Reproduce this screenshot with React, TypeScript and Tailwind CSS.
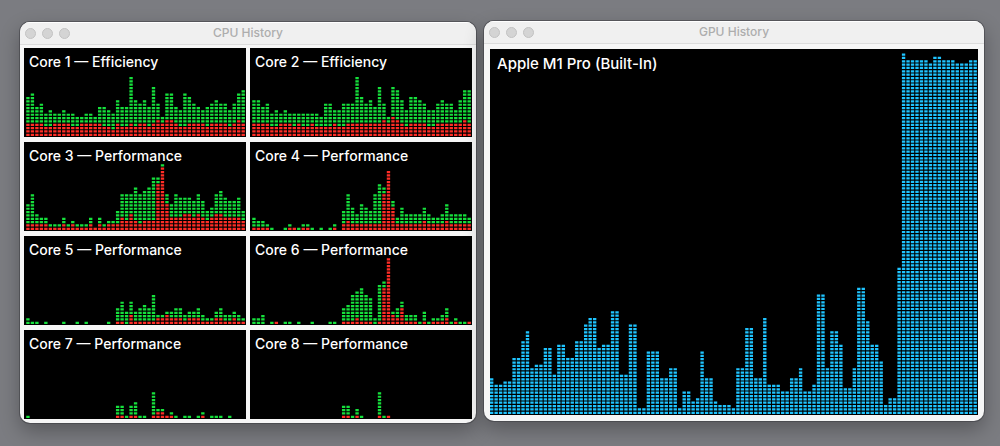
import React from 'react';

interface Core {
  name: string;
  total: number[];
  system: number[];
}

const ROW = 3;
const COL = 4;

// Load samples, in cells. `system` is the part of `total` drawn in red.
const CORES: Core[] = [
  {
    name: 'Core 1 — Efficiency',
    total: [12, 13, 9, 10, 7, 8, 7, 7, 8, 7, 7, 6, 6, 7, 7, 6, 9, 9, 8, 7, 11, 9, 9, 18, 11, 10, 11, 9, 15, 10, 6, 13, 13, 9, 8, 13, 12, 10, 9, 8, 9, 10, 11, 10, 10, 8, 10, 13, 14],
    system: [4, 4, 4, 4, 3, 3, 4, 4, 4, 4, 3, 3, 4, 4, 4, 4, 4, 3, 3, 2, 4, 3, 3, 4, 3, 4, 4, 3, 4, 5, 4, 5, 5, 4, 3, 3, 4, 4, 4, 4, 3, 4, 4, 4, 4, 3, 4, 5, 4],
  },
  {
    name: 'Core 2 — Efficiency',
    total: [11, 11, 9, 10, 7, 8, 7, 8, 7, 7, 7, 7, 7, 7, 7, 6, 10, 10, 8, 8, 10, 10, 10, 18, 12, 10, 11, 9, 15, 10, 6, 15, 14, 11, 8, 12, 12, 11, 10, 8, 8, 10, 11, 10, 10, 8, 11, 14, 14],
    system: [4, 4, 4, 4, 3, 3, 4, 4, 4, 3, 4, 3, 3, 4, 3, 3, 3, 3, 4, 3, 3, 4, 4, 4, 4, 4, 4, 4, 4, 5, 4, 6, 5, 4, 3, 4, 4, 4, 4, 3, 3, 4, 4, 4, 4, 4, 4, 5, 4],
  },
  {
    name: 'Core 3 — Performance',
    total: [8, 11, 5, 4, 4, 2, 2, 2, 4, 2, 3, 2, 2, 2, 4, 1, 4, 2, 3, 3, 6, 11, 11, 11, 13, 11, 12, 13, 16, 16, 20, 11, 8, 11, 10, 10, 10, 9, 11, 9, 6, 7, 11, 12, 10, 9, 9, 10, 6],
    system: [2, 2, 2, 2, 2, 1, 1, 1, 2, 1, 2, 1, 1, 1, 2, 1, 2, 1, 2, 2, 2, 4, 3, 5, 3, 2, 3, 3, 3, 14, 19, 8, 4, 4, 4, 5, 5, 4, 5, 4, 3, 4, 5, 5, 4, 4, 4, 4, 3],
  },
  {
    name: 'Core 4 — Performance',
    total: [4, 3, 3, 2, 1, 0, 0, 1, 2, 1, 1, 2, 2, 1, 0, 1, 0, 1, 2, 0, 6, 11, 7, 5, 8, 7, 6, 11, 14, 13, 18, 9, 4, 7, 5, 5, 5, 5, 7, 5, 4, 4, 5, 8, 5, 5, 5, 5, 4],
    system: [1, 1, 1, 1, 0, 0, 0, 0, 1, 1, 0, 1, 1, 0, 0, 0, 0, 0, 1, 0, 2, 3, 2, 2, 2, 2, 2, 2, 2, 11, 18, 7, 2, 2, 2, 2, 2, 2, 3, 2, 2, 2, 2, 3, 2, 2, 2, 2, 2],
  },
  {
    name: 'Core 5 — Performance',
    total: [2, 1, 1, 0, 1, 0, 0, 0, 1, 0, 0, 1, 0, 1, 0, 0, 0, 0, 1, 0, 5, 7, 4, 7, 4, 5, 6, 5, 9, 3, 3, 4, 4, 5, 5, 3, 4, 4, 5, 3, 2, 2, 4, 5, 3, 3, 4, 3, 2],
    system: [0, 0, 0, 0, 0, 0, 0, 0, 0, 0, 0, 0, 0, 0, 0, 0, 0, 0, 0, 0, 1, 1, 0, 3, 1, 1, 1, 1, 1, 2, 2, 3, 2, 2, 2, 1, 2, 2, 2, 1, 1, 1, 2, 2, 1, 1, 2, 1, 1],
  },
  {
    name: 'Core 6 — Performance',
    total: [2, 2, 3, 0, 1, 1, 0, 1, 1, 0, 1, 0, 0, 1, 0, 0, 0, 1, 1, 0, 5, 6, 9, 10, 11, 9, 8, 2, 12, 13, 20, 4, 5, 7, 3, 3, 3, 1, 4, 1, 2, 2, 3, 5, 1, 2, 1, 1, 1],
    system: [0, 0, 0, 0, 0, 1, 0, 0, 0, 0, 0, 0, 0, 0, 0, 0, 0, 0, 0, 0, 1, 1, 1, 2, 1, 1, 1, 0, 1, 11, 20, 3, 2, 5, 1, 1, 1, 0, 1, 0, 1, 1, 1, 2, 0, 1, 0, 0, 1],
  },
  {
    name: 'Core 7 — Performance',
    total: [1, 0, 0, 0, 0, 0, 0, 0, 0, 0, 0, 0, 0, 0, 0, 0, 0, 0, 0, 0, 4, 4, 1, 4, 5, 1, 1, 0, 8, 3, 3, 1, 2, 1, 0, 1, 1, 0, 1, 2, 0, 1, 1, 1, 0, 1, 0, 0, 0],
    system: [0, 0, 0, 0, 0, 0, 0, 0, 0, 0, 0, 0, 0, 0, 0, 0, 0, 0, 0, 0, 1, 1, 0, 1, 1, 0, 0, 0, 1, 2, 2, 1, 1, 0, 0, 0, 0, 0, 0, 1, 0, 0, 0, 0, 0, 0, 0, 0, 0],
  },
  {
    name: 'Core 8 — Performance',
    total: [0, 0, 0, 0, 0, 0, 0, 0, 0, 0, 0, 0, 0, 0, 0, 0, 0, 0, 0, 0, 4, 4, 1, 3, 1, 0, 0, 0, 8, 1, 1],
    system: [0, 0, 0, 0, 0, 0, 0, 0, 0, 0, 0, 0, 0, 0, 0, 0, 0, 0, 0, 0, 1, 1, 0, 1, 0, 0, 0, 0, 1, 0, 1],
  },
];

const GPU_LOAD = [
  11, 9, 9, 10, 10, 17, 17, 22, 25, 14, 15, 15, 20, 20, 12, 21, 21, 17, 17, 22, 22, 27, 29, 29, 20, 21, 21, 31, 31, 12,
  12, 27, 27, 2, 2, 19, 19, 19, 11, 11, 14, 14, 2, 7, 7, 4, 5, 19, 11, 11, 4, 3, 3, 3, 2, 14, 14, 26, 26, 11, 11, 29, 9,
  9, 9, 7, 7, 11, 11, 14, 7, 7, 9, 36, 36, 14, 25, 25, 21, 8, 8, 14, 38, 38, 28, 21, 21, 16, 3, 5, 5, 44, 108, 106, 106,
  106, 106, 106, 105, 107, 107, 106, 106, 106, 105, 105, 105, 106, 106,
];

// One path holding every lit cell between the `from` and `to` levels
const cells = (from: number[], to: number[], left: number, height: number) =>
  to
    .map((top, i) => {
      let d = '';
      for (let level = from[i] ?? 0; level < top; level++) {
        d += `M${left + i * COL} ${height - (level + 1) * ROW}h3v2h-3z`;
      }
      return d;
    })
    .join('');

const WindowFrame: React.FC<{ title: string; className?: string; children: React.ReactNode }> = ({ title, className = '', children }) => (
  <section className={`rounded-[10px] bg-[#f6f6f6] overflow-hidden shadow-[0_0_0_1px_rgba(60,60,65,0.55),0_8px_20px_rgba(0,0,0,0.3)] ${className}`}>
    <header className="grid grid-cols-[1fr_auto_1fr] items-center h-[23px] px-[5px] bg-[#f0f0f0] border-t border-t-white border-b border-b-[#dcdcdc]">
      <div className="flex gap-[6px]">
        {['Close', 'Minimize', 'Zoom'].map(label => (
          <button key={label} type="button" aria-label={label} className="w-[11px] h-[11px] rounded-full bg-[#d4d4d4] border border-[#c2c2c2]" />
        ))}
      </div>
      <h2 className="pb-px text-[12px] leading-4 font-medium text-[#adadad]">{title}</h2>
    </header>
    {children}
  </section>
);

const CorePanel: React.FC<{ core: Core }> = ({ core }) => (
  <article className="grid h-[89px] bg-black">
    <svg viewBox="0 0 198 80" preserveAspectRatio="none" className="col-start-1 row-start-1 w-full h-[89px]" aria-hidden="true">
      <path d={cells(core.system, core.total, 2, 80)} fill="#16e03c" />
      <path d={cells([], core.system, 2, 80)} fill="#ff2d26" />
    </svg>
    <h3 className="col-start-1 row-start-1 pl-[5px] pt-[5px] text-[14px] leading-[18px] font-medium text-white">{core.name}</h3>
  </article>
);

const App: React.FC = () => {
  return (
    <main className="min-h-screen bg-[#7b7c81] font-['Inter',sans-serif]">
      <div className="grid grid-cols-[456fr_500fr] items-start gap-2 pl-5 pr-4 pt-[21px] pb-[23px]">
        <WindowFrame title="CPU History" className="mt-px">
          <div className="grid grid-cols-2 gap-x-1 gap-y-[5px] px-1 pt-[3px] pb-1">
            {CORES.map(core => (
              <CorePanel key={core.name} core={core} />
            ))}
          </div>
        </WindowFrame>

        <WindowFrame title="GPU History">
          <div className="px-[6px] pt-[5px] pb-[6px]">
            <article className="grid h-[366px] bg-black">
              <svg viewBox="0 0 436 328" preserveAspectRatio="none" className="col-start-1 row-start-1 w-full h-[366px]" aria-hidden="true">
                <path d={cells([], GPU_LOAD, 0, 328)} fill="#1fc4ff" />
              </svg>
              <h3 className="col-start-1 row-start-1 pl-[7px] pt-[6px] text-[15px] leading-[18px] font-medium text-white">Apple M1 Pro (Built-In)</h3>
            </article>
          </div>
        </WindowFrame>
      </div>
    </main>
  );
};

export default App;
